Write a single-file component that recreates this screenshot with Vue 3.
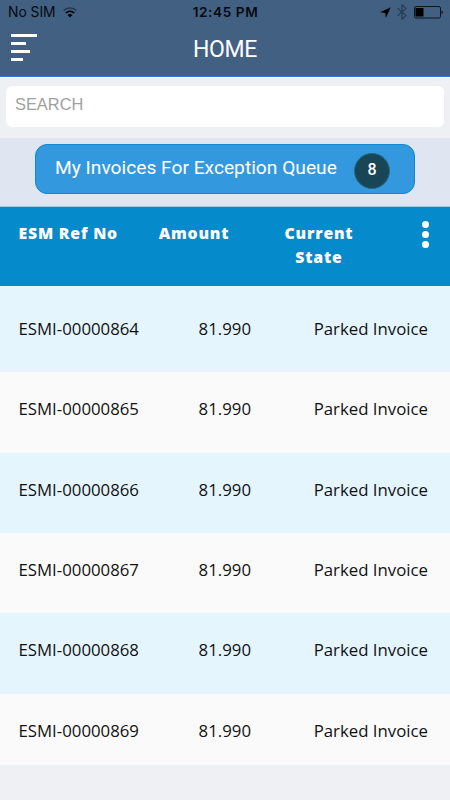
<script setup>
import { ref } from "vue";

const search = ref("");
const queueCount = 8;

const invoices = [
  { ref: "ESMI-00000864", amount: "81.990", state: "Parked Invoice" },
  { ref: "ESMI-00000865", amount: "81.990", state: "Parked Invoice" },
  { ref: "ESMI-00000866", amount: "81.990", state: "Parked Invoice" },
  { ref: "ESMI-00000867", amount: "81.990", state: "Parked Invoice" },
  { ref: "ESMI-00000868", amount: "81.990", state: "Parked Invoice" },
  { ref: "ESMI-00000869", amount: "81.990", state: "Parked Invoice" },
];
</script>

<template>
  <div class="screen">
    <header class="top">
      <div class="status">
        <div class="carrier">
          <span>No SIM</span>
          <svg class="wifi" width="14" height="11" viewBox="0 0 14 11">
            <path d="M0.7 3.4C4.2 0.1 9.8 0.1 13.3 3.4" fill="none" stroke="#24374b" stroke-width="1.4" />
            <path d="M2.8 6C5.2 3.7 8.8 3.7 11.2 6" fill="none" stroke="#000" stroke-width="1.7" />
            <path d="M4.6 7.9C6 6.7 8 6.7 9.4 7.9L7 10.4Z" fill="#000" />
          </svg>
        </div>
        <span class="time">12:45 PM</span>
        <div class="indicators">
          <svg class="location" width="11" height="11" viewBox="0 0 11 11">
            <path d="M10.8 0.2L5.9 10.8L5.2 5.9L0.1 5.2Z" fill="#000" />
          </svg>
          <svg class="bluetooth" width="10" height="16" viewBox="0 0 10 16">
            <path d="M0.6 4.2L9 11.6L5 15.2V0.8L9 4.4L0.6 11.8" fill="none" stroke="#263c52" stroke-width="1.2" />
          </svg>
          <svg class="battery" width="29" height="13" viewBox="0 0 29 13">
            <rect x="0.5" y="0.5" width="26" height="11.5" rx="1.5" fill="none" stroke="#0d1620" />
            <rect x="1.5" y="2" width="8" height="8.5" fill="#000" />
            <path d="M27.5 4.2Q28.8 4.8 28.8 6.3T27.5 8.4Z" fill="#0d1620" />
          </svg>
        </div>
      </div>
      <div class="navbar">
        <button class="menu" type="button" aria-label="Menu">
          <i class="w1"></i>
          <i class="w2"></i>
          <i class="w3"></i>
          <i class="w4"></i>
        </button>
        <h1>HOME</h1>
      </div>
    </header>

    <div class="search">
      <input v-model="search" type="text" placeholder="SEARCH" />
    </div>

    <div class="queue-bar">
      <button class="queue" type="button">
        <span class="queue-name">My Invoices For Exception Queue</span>
        <span class="count">{{ queueCount }}</span>
      </button>
    </div>

    <div class="table">
      <div class="thead">
        <span class="col-ref">ESM Ref No</span>
        <span class="col-amount">Amount</span>
        <span class="col-state">Current State</span>
        <button class="more" type="button" aria-label="More">
          <i></i>
          <i></i>
          <i></i>
        </button>
      </div>
      <div v-for="item in invoices" :key="item.ref" class="row">
        <span class="ref">{{ item.ref }}</span>
        <span class="amount">{{ item.amount }}</span>
        <span class="state">{{ item.state }}</span>
      </div>
    </div>
  </div>
</template>

<style>
body {
  margin: 0;
  background: #eff0f3;
}
</style>

<style scoped>
.screen {
  width: 100%;
  height: 800px;
  overflow: hidden;
  background: #eff0f3;
  font-family: "Open Sans", "Noto Sans", sans-serif;
}

button {
  padding: 0;
  border: 0;
  background: none;
}

.top {
  box-sizing: border-box;
  height: 77px;
  background: #426082;
  border-bottom: 1px solid #3672d4;
}

.status {
  display: grid;
  grid-template-columns: 1fr auto 1fr;
  align-items: center;
  height: 24px;
  padding: 0 7px 0 8px;
  font-family: Inter, "Liberation Sans", sans-serif;
  font-size: 13.8px;
  color: #060a10;
}

.carrier {
  display: flex;
  align-items: center;
  gap: 7px;
}

.time {
  font-size: 13.6px;
  font-weight: 600;
  letter-spacing: 0.6px;
}

.indicators {
  display: flex;
  align-items: center;
  justify-content: flex-end;
}

.bluetooth {
  margin: 0 7px 0 6px;
}

.navbar {
  display: grid;
  grid-template-columns: 60px 1fr 60px;
  align-items: start;
}

.menu {
  display: flex;
  flex-direction: column;
  gap: 5px;
  padding: 10px 0 0 11px;
}

.menu i {
  height: 3px;
  background: #fff;
}

.w1 {
  width: 26px;
}

.w2 {
  width: 15px;
}

.w3 {
  width: 19px;
}

.w4 {
  width: 12px;
}

h1 {
  margin: 0;
  padding-top: 12px;
  font-family: Roboto, sans-serif;
  font-size: 23px;
  font-weight: 400;
  line-height: 28px;
  letter-spacing: -0.4px;
  text-align: center;
  color: #fff;
}

.search {
  box-sizing: border-box;
  height: 61px;
  padding: 8px 6px 0;
  border-top: 1px solid #fff;
}

.search input {
  box-sizing: border-box;
  display: block;
  width: 100%;
  height: 41px;
  padding: 0 9px 4px;
  border: 0;
  border-radius: 6px;
  outline: none;
  background: #fff;
  font-family: "Liberation Sans", sans-serif;
  font-size: 16.4px;
}

.search input::placeholder {
  color: #a0a0a0;
}

.queue-bar {
  box-sizing: border-box;
  height: 68px;
  padding: 6px 35px 0;
  background: #dfe5f1;
}

.queue {
  box-sizing: border-box;
  display: flex;
  align-items: center;
  width: 100%;
  height: 50px;
  padding: 0 24px 0 19px;
  border: 1px solid #0d8bd1;
  border-radius: 12px;
  background: #3498de;
  color: #fff;
}

.queue-name {
  flex: 1;
  padding-bottom: 3px;
  font-family: Roboto, sans-serif;
  font-size: 19.2px;
  text-align: left;
  white-space: nowrap;
}

.count {
  box-sizing: border-box;
  width: 36px;
  height: 36px;
  margin-top: 3px;
  border: 1px solid #216a85;
  border-radius: 50%;
  background: #194657;
  font-family: Roboto, sans-serif;
  font-size: 16px;
  font-weight: 500;
  line-height: 31px;
  text-align: center;
}

.thead {
  box-sizing: border-box;
  display: grid;
  grid-template-columns: 18.5px 119.5px 112px 138px 1fr;
  align-items: start;
  height: 79.5px;
  padding-top: 14px;
  border-top: 1px solid #9acbe5;
  background: #058bcb;
  font-size: 15.8px;
  font-weight: 800;
  line-height: 24px;
  letter-spacing: 0.8px;
  text-align: center;
  color: #fff;
}

.col-ref {
  grid-column: 2;
  text-align: left;
}

.col-state {
  padding: 0 30px;
}

.more {
  display: flex;
  flex-direction: column;
  align-items: center;
  gap: 3px;
  padding-left: 12px;
}

.more i {
  width: 7px;
  height: 7px;
  border-radius: 50%;
  background: #fff;
}

.row {
  box-sizing: border-box;
  display: grid;
  grid-template-columns: 138px 94.5px 1fr;
  align-items: start;
  height: 80.4px;
  padding: 25.1px 22px 0 18.5px;
  background: #fafafa;
  font-size: 16.8px;
  line-height: 24px;
  color: #111;
}

.row:nth-child(even) {
  background: #e4f5fe;
}

.row:nth-child(2) {
  height: 86.7px;
  padding-top: 31.5px;
}

.row:last-child {
  height: 71.5px;
}

.amount,
.state {
  text-align: right;
}
</style>
